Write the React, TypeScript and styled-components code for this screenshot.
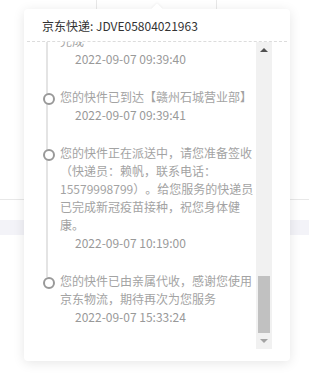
import React from "react";
import styled, { createGlobalStyle } from "styled-components";

const GlobalStyle = createGlobalStyle`
  html, body { margin: 0; padding: 0; background: #fff; }
  body { font-family: "Noto Sans CJK SC", "Microsoft YaHei", sans-serif; }
  * { box-sizing: border-box; }
`;

const Page = styled.div`
  position: relative;
  width: 309px;
  height: 374px;
  overflow: hidden;
  background: #fff;
`;

const TableHead = styled.div`
  display: grid;
  grid-template-columns: 97px 120px 1fr;
  height: 200px;
  border-bottom: 1px solid #e8e8e8;
`;

const Cell = styled.div<{ $divider?: boolean }>`
  border-right: ${(p) => (p.$divider ? "1px solid #e8e8e8" : "none")};
`;

const Band = styled.div`
  margin-top: 20px;
  height: 15px;
  background: #f3f3f8;
`;

const Popover = styled.div`
  position: absolute;
  top: 9px;
  left: 24px;
  width: 266px;
  height: 352px;
  background: #fff;
  border-radius: 4px;
  box-shadow: 0 2px 12px 0 rgba(0, 0, 0, 0.1);
  display: flex;
  flex-direction: column;

  &::before {
    content: "";
    position: absolute;
    top: -4px;
    left: 129px;
    width: 8px;
    height: 8px;
    background: #fff;
    transform: rotate(45deg);
    box-shadow: -1px -1px 2px rgba(0, 0, 0, 0.04);
  }
`;

const Title = styled.div`
  position: relative;
  z-index: 1;
  margin: 0 3px;
  padding: 8px 15px 6px;
  font-size: 12px;
  line-height: 18px;
  color: #333;
  background: #fff;
  border-bottom: 1px dashed #dcdcdc;
`;

const Body = styled.div`
  flex: 1;
  min-height: 0;
  display: flex;
  padding: 0 18px 12px;
`;

const Viewport = styled.div`
  flex: 1;
  min-width: 0;
  overflow: hidden;
  display: flex;
  flex-direction: column;
  justify-content: flex-end;
  padding-bottom: 3px;
`;

const Item = styled.div<{ $last?: boolean }>`
  position: relative;
  flex-shrink: 0;
  padding: 0 0 20px 18px;

  &::before {
    content: "";
    position: absolute;
    left: 4px;
    top: 0;
    width: 2px;
    height: ${(p) => (p.$last ? "5px" : "100%")};
    background: #e4e4e4;
  }

  &::after {
    content: "";
    position: absolute;
    left: 1px;
    top: 5px;
    width: 8px;
    height: 8px;
    border: 2px solid #999;
    border-radius: 50%;
    background: #fff;
  }
`;

const Text = styled.div`
  font-size: 12px;
  line-height: 18px;
  color: #a3a3a3;
  text-spacing-trim: space-all;
`;

const Time = styled.div`
  padding-left: 15px;
  font-size: 12px;
  line-height: 18px;
  color: #999;
`;

const Scrollbar = styled.div`
  width: 16px;
  flex-shrink: 0;
  display: flex;
  flex-direction: column;
  background: #f1f1f1;
`;

const ScrollButton = styled.div`
  height: 16px;
  display: flex;
  align-items: center;
  justify-content: center;
`;

const Arrow = styled.span<{ $dir: "up" | "down"; $disabled?: boolean }>`
  width: 0;
  height: 0;
  border-left: 4px solid transparent;
  border-right: 4px solid transparent;
  ${(p) =>
    p.$dir === "up"
      ? `border-bottom: 4px solid ${p.$disabled ? "#a3a3a3" : "#505050"};`
      : `border-top: 4px solid ${p.$disabled ? "#a3a3a3" : "#505050"};`}
`;

const Track = styled.div`
  flex: 1;
  display: flex;
  flex-direction: column;
  justify-content: flex-end;
  padding: 0 2px;
`;

const Thumb = styled.div`
  height: 57px;
  background: #c1c1c1;
`;

const traces = [
  { text: "您的快件在【赣州石城营业部】分拣完成", time: "2022-09-07 09:39:40" },
  { text: "您的快件已到达【赣州石城营业部】", time: "2022-09-07 09:39:41" },
  {
    text: "您的快件正在派送中，请您准备签收（快递员：赖帆，联系电话：15579998799）。给您服务的快递员已完成新冠疫苗接种，祝您身体健康。",
    time: "2022-09-07 10:19:00",
  },
  { text: "您的快件已由亲属代收，感谢您使用京东物流，期待再次为您服务", time: "2022-09-07 15:33:24" },
];

export default function App() {
  return (
    <>
      <GlobalStyle />
      <Page>
        <TableHead>
          <Cell $divider />
          <Cell $divider />
          <Cell />
        </TableHead>
        <Band />
        <Popover>
          <Title>京东快递: JDVE05804021963</Title>
          <Body>
            <Viewport>
              {traces.map((t, i) => (
                <Item key={t.time} $last={i === traces.length - 1}>
                  <Text>{t.text}</Text>
                  <Time>{t.time}</Time>
                </Item>
              ))}
            </Viewport>
            <Scrollbar>
              <ScrollButton>
                <Arrow $dir="up" />
              </ScrollButton>
              <Track>
                <Thumb />
              </Track>
              <ScrollButton>
                <Arrow $dir="down" $disabled />
              </ScrollButton>
            </Scrollbar>
          </Body>
        </Popover>
      </Page>
    </>
  );
}
